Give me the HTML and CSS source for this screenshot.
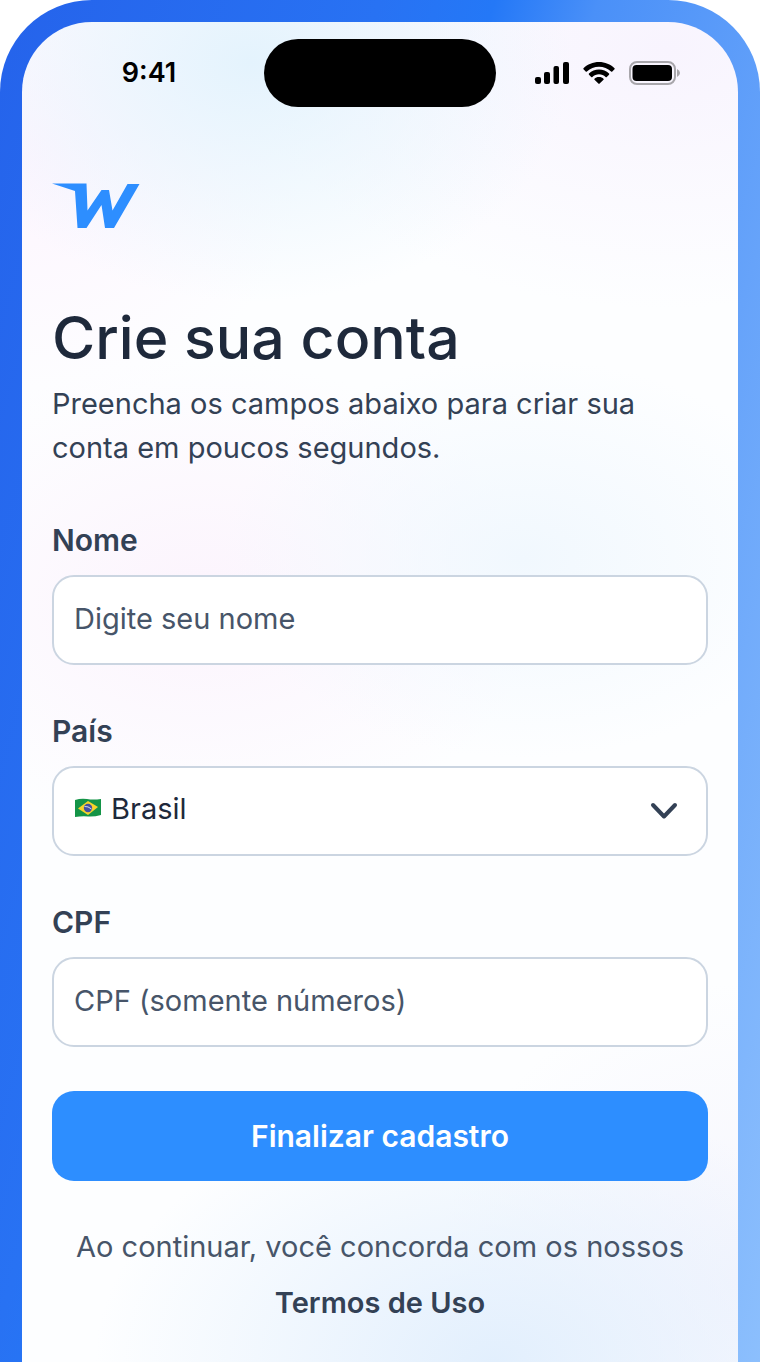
FILE: index.html
```html
<!DOCTYPE html>
<html lang="pt-BR">
<head>
<meta charset="utf-8">
<meta name="viewport" content="width=device-width, initial-scale=1">
<title>Crie sua conta</title>
<link rel="stylesheet" href="styles.css">
</head>
<body>
<div class="phone">
  <div class="screen">
    <header class="status">
      <time class="clock">9:41</time>
      <div class="island"></div>
      <div class="indicators">
        <svg width="34" height="22" viewBox="0 0 34 22" aria-label="Sinal">
          <rect x="0" y="15" width="6" height="7" rx="2"/>
          <rect x="9" y="10" width="6" height="12" rx="2"/>
          <rect x="18.500" y="4" width="5.500" height="18" rx="2"/>
          <rect x="28" y="0" width="6" height="22" rx="2"/>
        </svg>
        <svg width="32" height="22" viewBox="0 0 32 22" aria-label="Wi-Fi">
          <path d="M16 0C22 0 27.500 2.300 31.500 6.200Q32 6.800 31.500 7.300L29.300 9.500Q28.700 10 28.100 9.500C24.800 6.500 20.600 4.800 16 4.800S7.200 6.500 3.900 9.500Q3.300 10 2.700 9.500L.5 7.300Q0 6.800.5 6.200C4.500 2.300 10 0 16 0Z"/>
          <path d="M16 7.500C19.900 7.500 23.400 9 26 11.500Q26.600 12 26 12.700L23.800 14.900Q23.200 15.400 22.600 14.900C20.800 13.300 18.500 12.300 16 12.300S11.200 13.300 9.400 14.900Q8.800 15.400 8.200 14.900L6 12.700Q5.400 12 6 11.500C8.600 9 12.100 7.500 16 7.500Z"/>
          <path d="M16 15C17.900 15 19.600 15.700 20.500 16.700Q21 17.200 20.500 17.800L16.600 21.600Q16 22.200 15.400 21.600L11.500 17.800Q11 17.200 11.500 16.700C12.400 15.700 14.100 15 16 15Z"/>
        </svg>
        <svg width="51" height="24" viewBox="0 0 51 24" aria-label="Bateria">
          <rect x="1" y="1" width="45" height="22" rx="7" fill="none" stroke="#a8a6ab" stroke-width="2"/>
          <rect x="3.500" y="4" width="39.500" height="16" rx="4"/>
          <path d="M48 8Q51 9.500 51 12T48 16Z" fill="#a8a6ab"/>
        </svg>
      </div>
    </header>
    <main class="content">
      <svg class="logo" width="88" height="45" viewBox="0 0 88 45" aria-label="W">
        <path fill="#2d8eff" d="M0 .5H34.500L35.500 27.500 49.500 7H57L60.500 27.500 75.500 1H87.500L62 45H53L49.500 22 34.500 45H25.500L23 8Z"/>
      </svg>
      <h1 class="title">Crie sua conta</h1>
      <p class="lead">Preencha os campos abaixo para criar sua conta em poucos segundos.</p>
      <form class="form">
        <div class="field">
          <label class="label" for="nome">Nome</label>
          <input class="control" id="nome" type="text" placeholder="Digite seu nome">
        </div>
        <div class="field">
          <label class="label" for="pais">País</label>
          <div class="picker">
            <select class="control" id="pais"><option>Brasil</option></select>
            <svg class="flag" width="28" height="20" viewBox="0 0 28 20" aria-hidden="true">
              <path fill="#149447" d="M1 2Q7 0 13 1T27 1V17Q20 19 14 18.500T1 19Z"/>
              <path fill="#f7d32b" d="M4 10.500 14 3 24 9 14 17Z"/>
              <circle cx="14" cy="10" r="4.200" fill="#4550a0"/>
              <path d="M10.500 8.500Q14 8 17.500 11" fill="none" stroke="#d6dcec"/>
            </svg>
            <svg class="chevron" width="28" height="18" viewBox="0 0 28 18" aria-hidden="true">
              <path d="M3 3 14 14.500 25 3" fill="none" stroke="#334155" stroke-width="4" stroke-linecap="round" stroke-linejoin="round"/>
            </svg>
          </div>
        </div>
        <div class="field">
          <label class="label" for="cpf">CPF</label>
          <input class="control" id="cpf" type="text" inputmode="numeric" placeholder="CPF (somente números)">
        </div>
        <button class="submit" type="submit">Finalizar cadastro</button>
      </form>
      <p class="terms">Ao continuar, você concorda com os nossos <a class="terms-link" href="#termos">Termos de Uso</a></p>
    </main>
  </div>
</div>
</body>
</html>
```
FILE: styles.css
```css
* { box-sizing: border-box; }

body {
  margin: 0;
  background: #fff;
  color: #334155;
  font-family: Inter, "Liberation Sans", sans-serif;
}

.phone {
  min-height: 100vh;
  padding: 22px 22px 0;
  border-radius: 92px 92px 0 0;
  background: linear-gradient(106deg, #2563eb 0%, #2872f3 33%, #2478f7 43%, #4a90f8 52%, #66a3fa 72%, #8cbffd 100%);
  display: flex;
}

.screen {
  flex: 1;
  border-radius: 70px 70px 0 0;
  background:
    radial-gradient(ellipse 320px 240px at 32% 3%, #e4f3fd, transparent),
    radial-gradient(ellipse 280px 260px at 0 10%, #fdf5fe, transparent),
    radial-gradient(ellipse 420px 260px at 90% 2%, #f8f4fe, transparent),
    radial-gradient(ellipse 300px 200px at 70% 40%, #f1f8fe, transparent),
    radial-gradient(ellipse 340px 240px at 25% 43%, #fcf4fd, transparent),
    radial-gradient(ellipse 400px 270px at 66% 100%, #e2effd, transparent),
    radial-gradient(ellipse 300px 300px at 100% 94%, #f5f5fd, transparent),
    #fdfeff;
}

.status {
  display: grid;
  grid-template-columns: 1fr auto 1fr;
  align-items: center;
  padding-top: 17px;
}

.clock {
  padding-left: 12px;
  text-align: center;
  font-size: 27px;
  font-weight: 600;
  line-height: 32px;
  color: #000;
}

.island {
  width: 232px;
  height: 68px;
  border-radius: 34px;
  background: #000;
}

.indicators {
  display: flex;
  align-items: center;
  justify-content: center;
  gap: 14px;
  padding-right: 20px;
}

.content {
  display: flex;
  flex-direction: column;
  padding: 76px 30px 32px;
}

.logo { display: block; }

.title {
  margin: 72px 0 0;
  font-size: 59px;
  font-weight: 500;
  line-height: 76px;
  color: #1e293b;
}

.lead {
  margin: 6px 0 0;
  font-size: 29px;
  line-height: 44px;
}

.form {
  display: flex;
  flex-direction: column;
  gap: 44px;
  margin-top: 48px;
}

.field {
  display: flex;
  flex-direction: column;
  gap: 12px;
}

.label {
  font-size: 30px;
  font-weight: 600;
  line-height: 45px;
}

.control {
  width: 100%;
  height: 90px;
  padding: 0 20px 4px;
  border: 2px solid #cbd5e1;
  border-radius: 22px;
  background: #fff;
  color: #1e293b;
  font: 400 29px/44px Inter, "Liberation Sans", sans-serif;
  appearance: none;
}

.control::placeholder {
  color: #475569;
  opacity: 1;
}

.picker {
  display: grid;
  align-items: center;
}

.picker > * { grid-area: 1 / 1; }

.picker .control { padding-left: 57px; }

.flag {
  margin: 0 0 6px 22px;
  pointer-events: none;
}

.chevron {
  justify-self: end;
  margin-right: 30px;
  pointer-events: none;
}

.submit {
  height: 90px;
  border: 0;
  border-radius: 22px;
  background: #2d8eff;
  color: #fff;
  font: 600 30px/45px Inter, "Liberation Sans", sans-serif;
}

.terms {
  margin: 38px 0 0;
  text-align: center;
  font-size: 29px;
  line-height: 56px;
  color: #475569;
}

.terms-link {
  display: block;
  color: #334155;
  font-weight: 600;
  text-decoration: none;
}
```
